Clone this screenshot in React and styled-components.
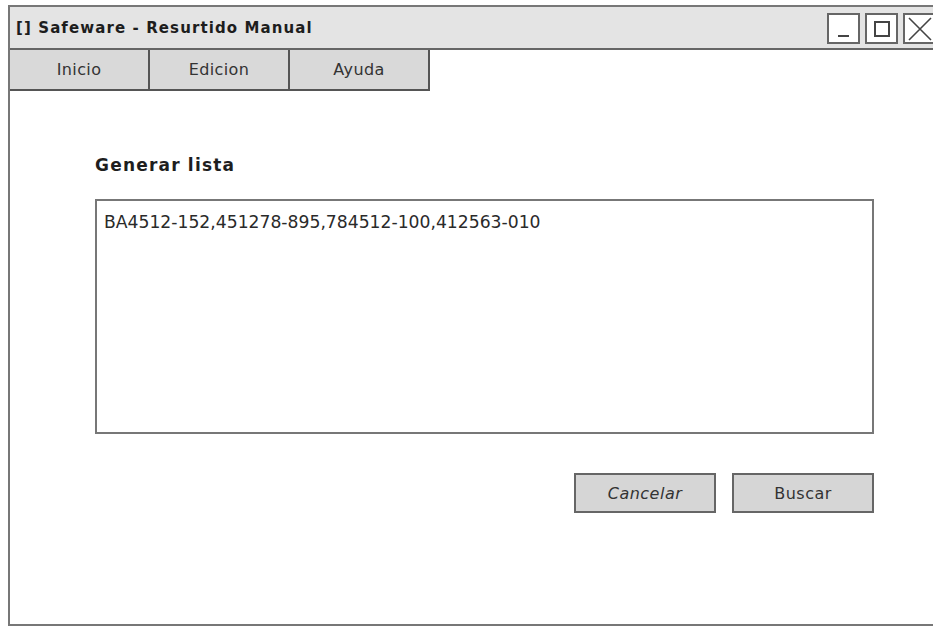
import React from "react";
import styled, { createGlobalStyle } from "styled-components";

const Global = createGlobalStyle`
  html, body { margin: 0; padding: 0; background: #fff; }
  body { font-family: "DejaVu Sans", "Liberation Sans", sans-serif; color: #222; }
`;

const Page = styled.div`
  width: 933px;
  height: 627px;
  padding: 5px 0 0 8px;
  box-sizing: border-box;
  overflow: hidden;
`;

const Window = styled.div`
  width: 930px;
  height: 621px;
  box-sizing: border-box;
  border: 2px solid #777;
  display: flex;
  flex-direction: column;
  background: #fff;
`;

const TitleBar = styled.div`
  height: 41px;
  background: #e4e4e4;
  border-bottom: 2px solid #666;
  display: flex;
  align-items: center;
  padding-left: 6px;
  flex-shrink: 0;
`;

const Title = styled.div`
  flex: 1;
  font-size: 15px;
  font-weight: bold;
  color: #1d1d1d;
  letter-spacing: 1.1px;
`;

const Controls = styled.div`
  display: flex;
  gap: 5px;
  align-self: flex-start;
  margin-top: 6px;
`;

const ControlBox = styled.div`
  width: 33px;
  height: 31px;
  box-sizing: border-box;
  border: 2px solid #666;
  background: #fff;
  display: flex;
  align-items: center;
  justify-content: center;
`;

const MenuBar = styled.div`
  display: flex;
  flex-shrink: 0;
`;

const MenuTab = styled.div`
  width: 140px;
  height: 41px;
  box-sizing: border-box;
  background: #d9d9d9;
  border-right: 2px solid #555;
  border-bottom: 2px solid #555;
  display: flex;
  align-items: center;
  justify-content: center;
  font-size: 16px;
  letter-spacing: 0.4px;
  color: #333;
`;

const Content = styled.div`
  flex: 1;
  padding: 64px 62px 0 85px;
  display: flex;
  flex-direction: column;
`;

const Heading = styled.div`
  font-size: 17px;
  font-weight: bold;
  letter-spacing: 1.2px;
  color: #1e1e1e;
  margin-bottom: 24px;
`;

const ListBox = styled.div`
  height: 235px;
  box-sizing: border-box;
  border: 2px solid #777;
  padding: 11px 7px;
  font-family: "DejaVu Sans", sans-serif;
  font-size: 17.2px;
  color: #2a2a2a;
`;

const Actions = styled.div`
  display: flex;
  justify-content: flex-end;
  gap: 16px;
  margin-top: 39px;
`;

const Button = styled.button`
  width: 142px;
  height: 40px;
  box-sizing: border-box;
  background: #d6d6d6;
  border: 2px solid #666;
  font-family: "DejaVu Sans", sans-serif;
  font-size: 16px;
  letter-spacing: 0.5px;
  font-style: ${(p) => (p.$italic ? "italic" : "normal")};
  color: #333;
  padding: 0;
`;

export default function App() {
  return (
    <>
      <Global />
      <Page>
        <Window>
          <TitleBar>
            <Title>[] Safeware - Resurtido Manual</Title>
            <Controls>
              <ControlBox>
                <svg width="22" height="22" viewBox="0 0 22 22">
                  <line x1="5" y1="18" x2="16" y2="18" stroke="#444" strokeWidth="2" />
                </svg>
              </ControlBox>
              <ControlBox>
                <svg width="22" height="22" viewBox="0 0 22 22">
                  <rect x="4" y="4" width="14" height="14" fill="none" stroke="#444" strokeWidth="2" />
                </svg>
              </ControlBox>
              <ControlBox>
                <svg width="26" height="26" viewBox="0 0 26 26">
                  <path d="M2 2 L24 24 M24 2 L2 24" stroke="#444" strokeWidth="1.6" />
                </svg>
              </ControlBox>
            </Controls>
          </TitleBar>
          <MenuBar>
            <MenuTab>Inicio</MenuTab>
            <MenuTab>Edicion</MenuTab>
            <MenuTab>Ayuda</MenuTab>
          </MenuBar>
          <Content>
            <Heading>Generar lista</Heading>
            <ListBox>BA4512-152,451278-895,784512-100,412563-010</ListBox>
            <Actions>
              <Button $italic>Cancelar</Button>
              <Button>Buscar</Button>
            </Actions>
          </Content>
        </Window>
      </Page>
    </>
  );
}
